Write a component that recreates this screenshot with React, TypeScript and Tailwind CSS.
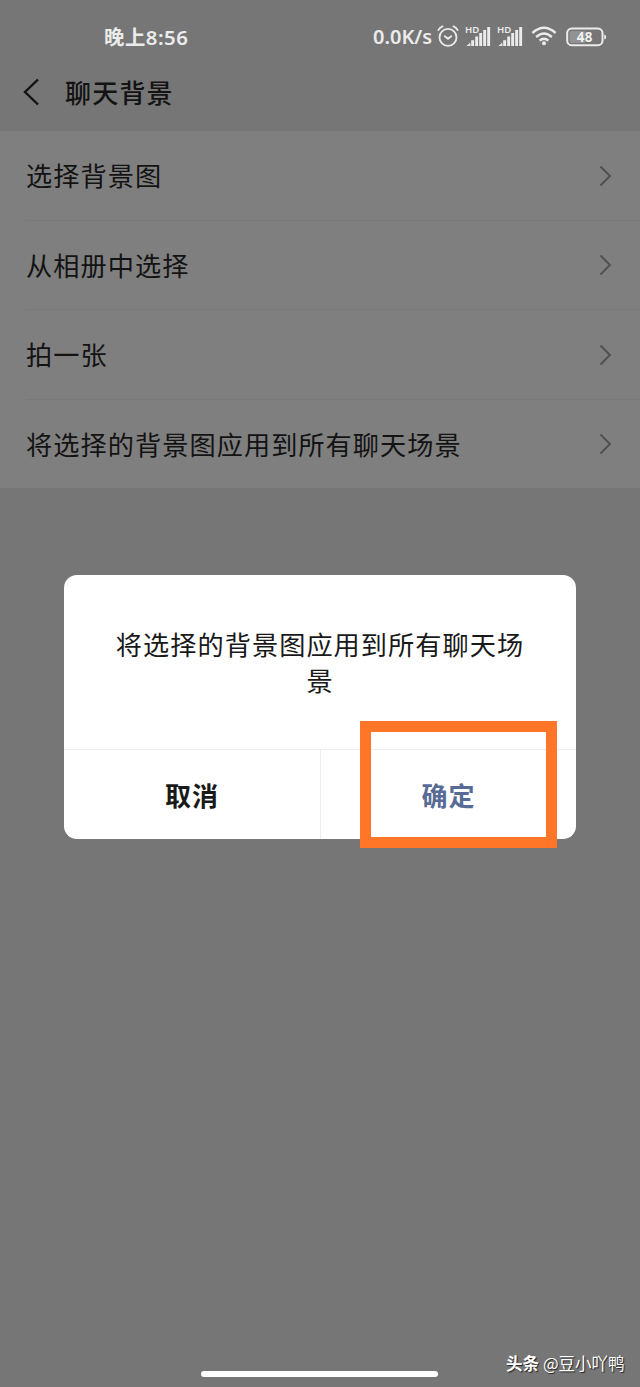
import React from "react";

const rows = ["选择背景图", "从相册中选择", "拍一张", "将选择的背景图应用到所有聊天场景"];

function AlarmIcon() {
  return (
    <svg className="block h-[22px] w-[22px]" viewBox="0 0 22 22" fill="none" stroke="#ebebeb" strokeWidth="1.8" strokeLinecap="round">
      <circle cx="11" cy="12.4" r="8.5" />
      <path d="M7.8 11.2 L11 13.8 L14.2 11.2" />
      <path d="M1.3 5.1 Q2.9 2.4 5.6 1.4 M20.7 5.1 Q19.1 2.4 16.4 1.4" />
    </svg>
  );
}

function SignalIcon() {
  return (
    <div className="relative h-[24px] w-[26px]">
      <svg className="block h-[24px] w-[26px]" viewBox="0 0 26 24" fill="#ebebeb">
        <path d="M1.5 22 L5.4 18.4 V22 Z" />
        <rect x="6.2" y="16.2" width="2.9" height="5.8" />
        <rect x="10.2" y="12.5" width="2.9" height="9.5" />
        <rect x="14.2" y="9" width="2.9" height="13" />
        <rect x="18.2" y="6" width="2.9" height="16" />
        <rect x="22.2" y="3" width="2.9" height="19" />
      </svg>
      <span className="absolute left-0 -top-px font-['Noto_Sans',sans-serif] text-[9.6px] font-semibold leading-[14px] text-[#ebebeb]">HD</span>
    </div>
  );
}

function WifiIcon() {
  return (
    <svg className="block h-[20px] w-[26px]" viewBox="0 0 26 20" fill="none" stroke="#ebebeb" strokeWidth="2.4">
      <path d="M1.4 7 Q13 -3.3 24.6 7" />
      <path d="M5.1 11 Q13 3.9 20.9 11" />
      <path d="M8.6 14.7 Q13 10.6 17.4 14.7" />
      <circle cx="13" cy="17.2" r="2" fill="#ebebeb" stroke="none" />
    </svg>
  );
}

function BatteryIcon() {
  return (
    <svg className="block h-[20px] w-[41px]" viewBox="0 0 41 20">
      <rect x="3.6" y="4" width="16" height="12" rx="2" fill="#929292" />
      <rect x="1.2" y="1.6" width="35.3" height="16.6" rx="4.5" fill="none" stroke="#ebebeb" strokeWidth="2" />
      <path d="M38.2 7.5 Q40.2 7.7 40.2 10 Q40.2 12.3 38.2 12.5 Z" fill="#ebebeb" />
      <text x="18.8" y="14.6" textAnchor="middle" fontSize="13.3" letterSpacing="0.4" fontWeight="700" fill="#f2f2f2" fontFamily="'Noto Sans', sans-serif">48</text>
    </svg>
  );
}

function Chevron() {
  return (
    <svg className="mt-px block h-[22px] w-[14px]" viewBox="0 0 14 22" fill="none" stroke="#505050" strokeWidth="1.9">
      <path d="M1.5 1.5 L11 11 L1.5 20.5" />
    </svg>
  );
}

export default function App() {
  return (
    <div className="relative flex h-[1387px] w-[640px] flex-col overflow-hidden bg-[#767676] font-['Noto_Sans_CJK_SC',sans-serif] text-[#131313]">
      <header className="flex h-[131px] flex-col">
        <div className="flex h-[61px] pt-[13px]">
          <div className="ml-[104px] mt-[9px] w-[269px] whitespace-nowrap font-['Noto_Sans','Noto_Sans_CJK_SC',sans-serif] text-[20.4px] font-semibold leading-[30px] tracking-[0.5px] text-[#ebebeb]">晚上8:56</div>
          <div className="mt-[9px] w-[64px] whitespace-nowrap font-['Noto_Sans',sans-serif] text-[20px] font-semibold leading-[30px] text-[#ebebeb]">0.0K/s</div>
          <div className="mt-[12px]"><AlarmIcon /></div>
          <div className="ml-[6px] mt-[11px]"><SignalIcon /></div>
          <div className="ml-[6px] mt-[11px]"><SignalIcon /></div>
          <div className="ml-[8px] mt-[13px]"><WifiIcon /></div>
          <div className="ml-[9px] mt-[14px]"><BatteryIcon /></div>
        </div>
        <div className="flex h-[62px] items-center pl-[22px]">
          <svg className="block h-[28px] w-[18px]" viewBox="0 0 18 28" fill="none" stroke="#131313" strokeWidth="2.4">
            <path d="M16 1.5 L3 14 L16 26.5" />
          </svg>
          <h1 className="ml-[25px] text-[26px] font-medium leading-[38px] tracking-[1.2px]">聊天背景</h1>
        </div>
      </header>
      <main className="flex h-[357px] flex-col bg-[#7f7f7f]">
        {rows.map((row, i) => (
          <div key={row} className={i < 3 ? "flex h-[89.5px] pl-[26px]" : "flex flex-1 pl-[26px]"}>
            <div className={i < 3 ? "flex flex-1 items-center justify-between border-b border-[#797979] pr-[27px]" : "flex flex-1 items-center justify-between pr-[27px]"}>
              <span className="text-[26.2px] leading-[38px] tracking-[1.05px]">{row}</span>
              <Chevron />
            </div>
          </div>
        ))}
      </main>
      <div role="dialog" className="mx-[64px] mt-[87px] flex h-[264px] flex-col rounded-[13px] bg-white">
        <p className="h-[174px] px-[51px] pt-[51px] text-center text-[26.2px] leading-[36px] tracking-[1.05px] text-[#191919]">
          将选择的背景图应用到所有聊天场<br />景
        </p>
        <div className="flex flex-1 border-t border-[#ededed]">
          <button className="w-[257px] border-r border-[#ededed] text-[26px] font-bold tracking-[1px] text-[#191919]">取消</button>
          <button className="flex-1 text-[26px] font-bold tracking-[1px] text-[#576b95]">确定</button>
        </div>
      </div>
      <div className="absolute left-[360px] top-[721px] h-[127px] w-[197px] border-[11px] border-[#ff7629]" />
      <footer className="mt-auto flex h-[48px] pl-[201px]">
        <div className="mt-[32px] h-[6px] w-[237px] rounded-full bg-white" />
        <div className="ml-[68px] mt-[11px] flex whitespace-nowrap text-[16.5px] leading-[26px] text-white [text-shadow:1px_1px_1px_#202020]">
          <span className="font-bold">头条</span>
          <span className="ml-[4px]">@豆小吖鸭</span>
        </div>
      </footer>
    </div>
  );
}
